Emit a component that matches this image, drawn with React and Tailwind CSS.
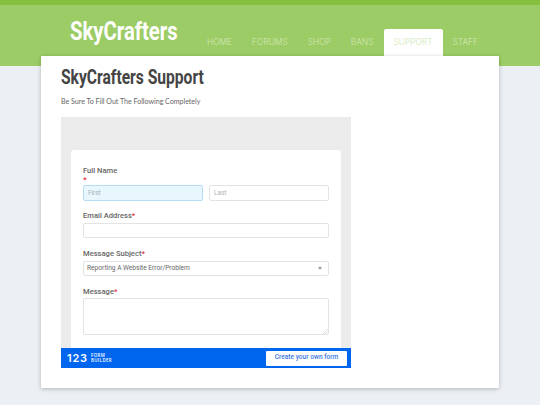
const navItems = ['HOME', 'FORUMS', 'SHOP', 'BANS', 'SUPPORT', 'STAFF'];

function Label({ children, star }) {
    return (
        <label className="block text-[7.6px] leading-[11px] font-medium text-[#666] font-['Roboto',sans-serif]">
            {children}
            {star && <span className="text-[#e02b3c]">*</span>}
        </label>
    );
}

export default function App() {
    return (
        <div className="min-h-[405px] bg-[#eceff4] font-['Open_Sans',sans-serif] overflow-hidden">
            {/* Header */}
            <header className="h-[66px] bg-[#9ccc65] border-t-[5px] border-[#85c13f]">
                <div className="flex h-full pl-[70px]">
                    <div className="w-[127px] pt-[10px] text-[26px] leading-[32px] font-bold text-white font-['Roboto',sans-serif] whitespace-nowrap origin-left scale-x-[0.78]">
                        SkyCrafters
                    </div>
                    <nav className="flex items-start pt-[24px] h-[51px]">
                        {navItems.map((item) => (
                            <a
                                key={item}
                                className={
                                    item === 'SUPPORT'
                                        ? 'h-[27px] px-[10px] pt-[7px] bg-white rounded-t-[2px] text-[8.4px] leading-[13px] font-light text-[#cfe6b4] font-["Inter",sans-serif]'
                                        : 'h-[27px] px-[10px] pt-[7px] text-[8.4px] leading-[13px] font-light text-[#d2e8b8] font-["Inter",sans-serif]'
                                }
                            >
                                {item}
                            </a>
                        ))}
                    </nav>
                </div>
            </header>

            {/* Main card */}
            <main className="relative ml-[41px] mt-[-10px] w-[458px] h-[332px] bg-white rounded-[1px] shadow-[0_1px_4px_rgba(0,0,0,0.25)] px-[20px] pt-[9px]">
                <h1 className="text-[20px] leading-[24px] font-bold text-[#444] font-['Roboto',sans-serif] whitespace-nowrap origin-left scale-x-[0.78]">
                    SkyCrafters Support
                </h1>
                <p className="mt-[7px] text-[7.05px] leading-[11px] text-[#666] font-['Lato',sans-serif]">
                    Be Sure To Fill Out The Following Completely
                </p>

                {/* Embedded form */}
                <div className="relative mt-[10px] w-[290px] h-[251px] bg-[#ebebeb] px-[10px] pt-[33px] overflow-hidden">
                    <form className="h-[230px] bg-white rounded-[3px] px-[12px] pt-[15px]">
                        <Label>Full Name</Label>
                        <div className="text-[7px] leading-[7px] font-semibold text-[#e02b3c]">*</div>
                        <div className="flex gap-[6px] mt-[2px]">
                            <input
                                placeholder="First"
                                className="w-[120px] h-[16px] px-[4px] text-[6.4px] font-['Roboto',sans-serif] bg-[#e8f7fe] border border-[#b5dcf2] rounded-[2px] placeholder:text-[#a5b0b5]"
                            />
                            <input
                                placeholder="Last"
                                className="w-[120px] h-[16px] px-[4px] text-[6.4px] font-['Roboto',sans-serif] bg-white border border-[#e3e3e3] rounded-[2px] placeholder:text-[#b0b0b0]"
                            />
                        </div>

                        <div className="mt-[9px]">
                            <Label star>Email Address</Label>
                        </div>
                        <input className="block w-[246px] h-[15px] mt-[2px] bg-white border border-[#e3e3e3] rounded-[2px]" />

                        <div className="mt-[10px]">
                            <Label star>Message Subject</Label>
                        </div>
                        <div className="flex items-center justify-between w-[246px] h-[15px] mt-[2px] px-[3px] border border-[#e3e3e3] rounded-[2px] text-[6.6px] font-['Roboto',sans-serif] text-[#666]">
                            <span>Reporting A Website Error/Problem</span>
                            <span className="mr-[3px] w-0 h-0 border-x-[2.5px] border-x-transparent border-t-[3px] border-t-[#999]"></span>
                        </div>

                        <div className="mt-[10px]">
                            <Label star>Message</Label>
                        </div>
                        <div className="relative w-[246px] h-[37px] mt-[1px]">
                            <textarea className="block w-full h-full resize-none bg-white border border-[#e3e3e3] rounded-[2px]"></textarea>
                            <svg className="absolute right-[1px] bottom-[1px]" width="5" height="5" viewBox="0 0 5 5">
                                <path d="M0 5L5 0M2.5 5L5 2.5" stroke="#c4c4c4" strokeWidth="0.6" />
                            </svg>
                        </div>
                    </form>

                    {/* Builder banner */}
                    <div className="absolute left-0 right-0 bottom-0 h-[20px] bg-[#0066f0] flex items-center justify-between pl-[6px] pr-[4px]">
                        <div className="flex items-center gap-[3px] text-white">
                            <span className="text-[11px] leading-[11px] font-semibold tracking-[0.8px] font-['Inter',sans-serif]">123</span>
                            <span className="text-[4.4px] leading-[5px] font-semibold tracking-[0.4px]">
                                FORM
                                <br />
                                BUILDER
                            </span>
                        </div>
                        <button className="w-[81px] h-[15px] bg-white rounded-[1px] text-[6.6px] font-medium font-['Roboto',sans-serif] text-[#3a78e4]">
                            Create your own form
                        </button>
                    </div>
                </div>
            </main>
        </div>
    );
}
